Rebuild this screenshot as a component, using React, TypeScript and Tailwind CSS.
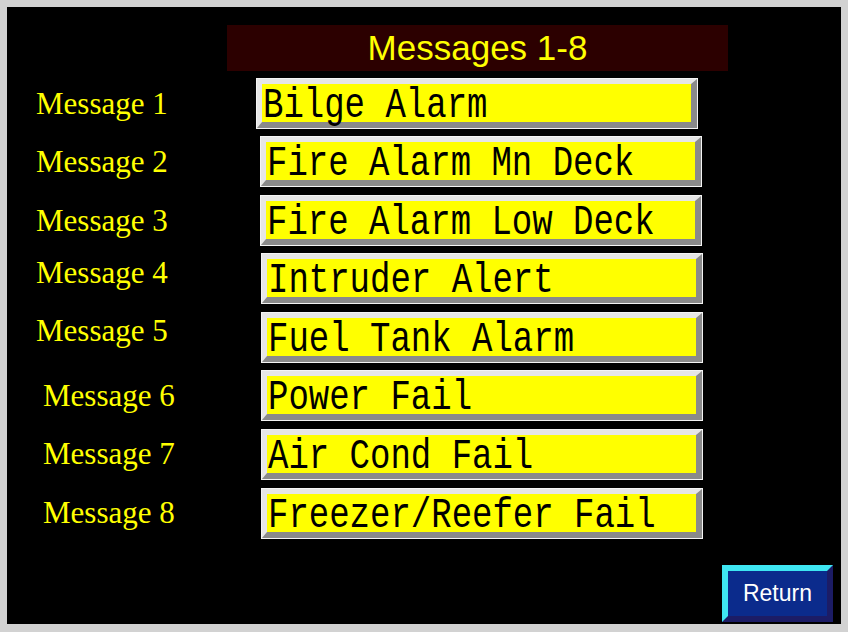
const rows = [
  { label: "Message 1", text: "Bilge Alarm", gap: "mt-[8px]", side: "w-[250px] pl-[29px] pt-[9px]" },
  { label: "Message 2", text: "Fire Alarm Mn Deck", gap: "mt-[9px]", side: "w-[254px] pl-[29px] pt-[9px]" },
  { label: "Message 3", text: "Fire Alarm Low Deck", gap: "mt-[10px]", side: "w-[254px] pl-[29px] pt-[9px]" },
  { label: "Message 4", text: "Intruder Alert", gap: "mt-[9px]", side: "w-[255px] pl-[29px] pt-[3px]" },
  { label: "Message 5", text: "Fuel Tank Alarm", gap: "mt-[10px]", side: "w-[255px] pl-[29px] pt-[2px]" },
  { label: "Message 6", text: "Power Fail", gap: "mt-[9px]", side: "w-[255px] pl-[36px] pt-[9px]" },
  { label: "Message 7", text: "Air Cond Fail", gap: "mt-[10px]", side: "w-[255px] pl-[36px] pt-[8px]" },
  { label: "Message 8", text: "Freezer/Reefer Fail", gap: "mt-[10px]", side: "w-[255px] pl-[36px] pt-[8px]" },
];

function MessageRow({ label, text, gap, side }: (typeof rows)[number]) {
  return (
    <div className={`flex h-[49px] ${gap}`}>
      <div className={`shrink-0 ${side}`}>
        <span className="block font-['Liberation_Serif',serif] text-[31px] leading-none text-[#ffff00]">
          {label}
        </span>
      </div>
      <div className="w-[440px] shrink-0 border-t-[5px] border-l-[5px] border-b-[6px] border-r-[6px] border-t-[#e6e6e6] border-l-[#e6e6e6] border-b-[#8a8a8a] border-r-[#8a8a8a] outline outline-1 outline-[#f4f4f4]">
        <div className="h-full bg-[#ffff00] pl-[1px]">
          <span className="block origin-center translate-y-[3px] scale-y-[1.26] whitespace-pre font-['Liberation_Mono',monospace] text-[34px] leading-[38px] text-black">
            {text}
          </span>
        </div>
      </div>
    </div>
  );
}

export default function App() {
  return (
    <div className="h-[632px] w-[848px] bg-[#d2d2d2] pt-[7px] pl-[7px] pr-[7px] pb-[8px]">
      <div className="flex h-full flex-col bg-black">
        <div className="ml-[220px] mt-[18px] flex h-[46px] w-[501px] items-center justify-center bg-[#2c0000] font-['Liberation_Sans',sans-serif] text-[35px] text-[#ffff00]">
          Messages 1-8
        </div>

        {rows.map((r) => (
          <MessageRow key={r.label} {...r} />
        ))}

        <button className="mt-auto mr-[8px] mb-[2px] flex h-[57px] w-[111px] items-center justify-center self-end border-[6px] border-t-[#3ee6f2] border-l-[#3ee6f2] border-b-[#1c1c66] border-r-[#1c1c66] bg-[#0b2b8c] font-['Liberation_Sans',sans-serif] text-[23px] text-white">
          Return
        </button>
      </div>
    </div>
  );
}
